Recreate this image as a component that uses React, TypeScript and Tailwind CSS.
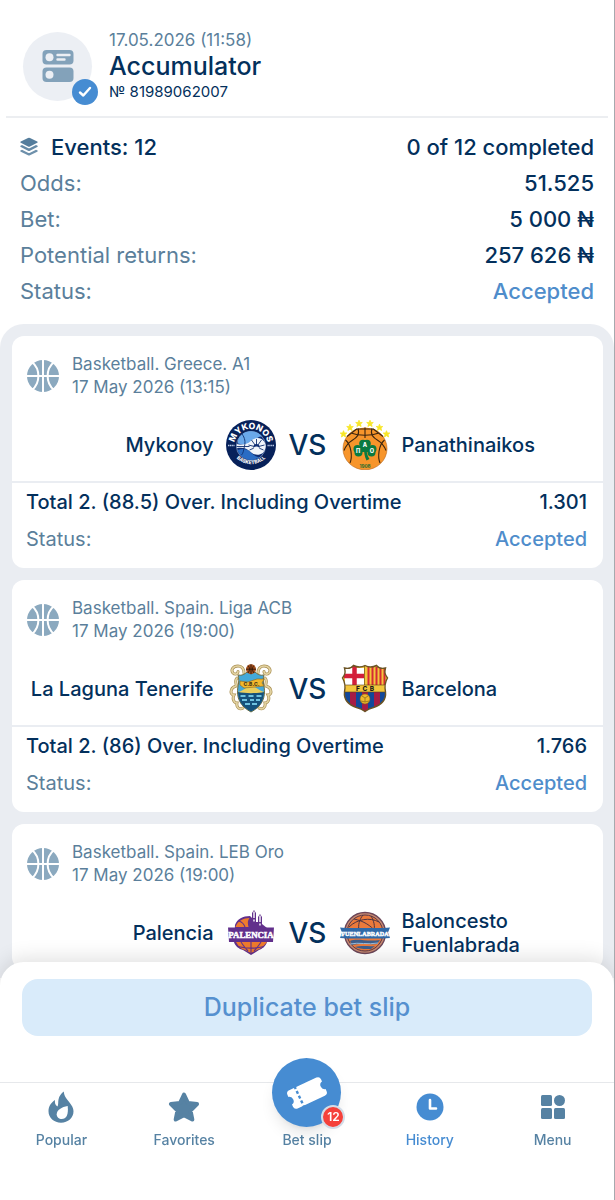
import type { ReactNode } from "react";

type Team = { name: string; logo: ReactNode };

type BetEvent = {
  id: number;
  league: string;
  date: string;
  home: Team;
  away: Team;
  market: string;
  odds: string;
};

function MykonosLogo() {
  return (
    <svg viewBox="0 0 50 50" className="size-12.5 shrink-0" role="img" aria-label="Mykonos Basketball">
      <defs>
        <path id="mykonos-top" d="M8.5 29a16.8 16.8 0 1 1 33 0" />
        <path id="mykonos-bottom" d="M5 29a20.8 20.8 0 0 0 40 0" />
      </defs>
      <circle cx="25" cy="25" r="25" fill="#07215a" />
      <circle cx="25" cy="26" r="14.6" fill="#0e2d73" stroke="#cfe0f4" strokeWidth="0.5" />
      <path d="M12 20a14 14 0 0 1 24-3.500c-4 0-6 2-8 5-3 4-9 4-16 2z" fill="#6aa9ea" />
      <path d="M11.500 30c6-2 10-1 13 2s5 5 9 5A14 14 0 0 1 11.500 30z" fill="#2a6cc4" />
      <path d="M10.800 24c7 1.500 11 0 14-3 4-4 10-4 13 0 3 4 2 9-1 12-4 3-9 2-12-1-4-4-8-5-14-4z" fill="#f1f5fb" />
      <g stroke="#10306f" strokeWidth="0.9" fill="none">
        <path d="M10.500 26.500h13M16 14c3 4 3.500 8 2.500 12s-1 7-3 9" />
        <path d="M30.500 27v-8M30.500 27l-5-7M30.500 27l5-7M30.500 27l-8-2M30.500 27l8-2M30.500 27l-7 3M30.500 27l7 3" />
      </g>
      <circle cx="30.500" cy="27" r="3" fill="#0e2d73" />
      <path d="M27.500 34v-4.500a3 3 0 0 1 6 0V34z" fill="#f1f5fb" />
      <text className="font-[Inter]" fontSize="8.6" fontWeight="800" fill="#fff" textAnchor="middle">
        <textPath href="#mykonos-top" startOffset="50%">MYKONOS</textPath>
      </text>
      <text className="font-[Inter]" fontSize="4.8" fontWeight="800" fill="#fff" textAnchor="middle">
        <textPath href="#mykonos-bottom" startOffset="50%">BASKETBALL</textPath>
      </text>
      <path d="M2 25.500h6.500M41.500 25.500H48" stroke="#b9c9e6" strokeWidth="1.400" strokeDasharray="1.300 .5" />
    </svg>
  );
}

const starSpots = [
  [3.5, 14],
  [10, 7.5],
  [19, 3.5],
  [30, 3.5],
  [39.500, 7.500],
  [46.500, 14],
];

function PanathinaikosLogo() {
  return (
    <svg viewBox="0 0 50 50" className="size-12.5 shrink-0" role="img" aria-label="Panathinaikos">
      <ellipse cx="25" cy="28.600" rx="22" ry="21.200" fill="#f7952b" stroke="#b9651a" strokeWidth="0.6" />
      <path d="M0 0h50v12L38 9H12L0 12z" fill="#fff" />
      <path d="M9 14Q17 7.500 25 7.500T41 14z" fill="#f7952b" />
      <g stroke="#3b2510" strokeWidth="1.100" fill="none">
        <path d="M25 7.500V18M18 8.500c2 6-1 9-6 12-4 2.500-6.500 6-8 10M32 8.500c-2 6 1 9 6 12 4 2.500 6.500 6 8 10" />
        <path d="M11 13c8 3 20 3 28 0M5.500 20c6 5 7 17 4.500 23M44.500 20c-6 5-7 17-4.500 23M16.500 9h17M7 16.500 17 8.800M43 16.500 33 8.800" />
      </g>
      {starSpots.map(([x, y]) => (
        <path
          key={x}
          transform={`translate(${x} ${y})`}
          d="M0-3.300.9-1.100 3.300-1 1.500.600 2.100 3 0 1.700-2.100 3-1.500.600-3.300-1-.9-1.100z"
          fill="#f8e628"
          stroke="#f8e628"
          strokeWidth="0.8"
        />
      ))}
      <g fill="#0a7a40">
        <circle cx="23" cy="23.500" r="3.800" />
        <circle cx="27" cy="23.500" r="3.800" />
        <circle cx="17.500" cy="29" r="4" />
        <circle cx="18.500" cy="32.500" r="4" />
        <circle cx="32.500" cy="29" r="4" />
        <circle cx="31.500" cy="32.500" r="4" />
        <path d="M20 24h10v8H20z" />
        <path d="M24 28h2.500c0 5 1 8 3 11l-3 1.500c-2-4-2.500-8-2.500-12.500z" />
      </g>
      <g className="font-[Inter]" fontSize="5.6" fontWeight="800" fill="#fff" textAnchor="middle">
        <text x="25" y="26.500">A</text>
        <text x="18" y="33">Π</text>
        <text x="32" y="33">O</text>
      </g>
      <text x="25" y="48" className="font-[Inter]" fontSize="4.6" fontWeight="700" fill="#186b32" textAnchor="middle">
        1908
      </text>
    </svg>
  );
}

function TenerifeLogo() {
  return (
    <svg viewBox="0 0 50 50" className="size-12.5 shrink-0" role="img" aria-label="La Laguna Tenerife">
      <g fill="none" strokeLinecap="round">
        <g stroke="#a98f52" strokeWidth="3">
          <path d="M18 9c0-4-2-7-6-7C7 2 4.500 6 7 9c2 2 5 1 5-1.500M32 9c0-4 2-7 6-7 5 0 7.500 4 5 7-2 2-5 1-5-1.500" />
          <path d="M11 14c-3 3 0 6-1 8-3 1-5 3-5 6 0 2 2 3 3 3-2 4 0 8 3 8-1 5 3 7 6 5M39 14c3 3 0 6 1 8 3 1 5 3 5 6 0 2-2 3-3 3 2 4 0 8-3 8 1 5-3 7-6 5" />
        </g>
        <g stroke="#e3d3a2" strokeWidth="1.700">
          <path d="M18 9c0-4-2-7-6-7C7 2 4.500 6 7 9c2 2 5 1 5-1.500M32 9c0-4 2-7 6-7 5 0 7.500 4 5 7-2 2-5 1-5-1.500" />
          <path d="M11 14c-3 3 0 6-1 8-3 1-5 3-5 6 0 2 2 3 3 3-2 4 0 8 3 8-1 5 3 7 6 5M39 14c3 3 0 6 1 8 3 1 5 3 5 6 0 2-2 3-3 3 2 4 0 8-3 8 1 5-3 7-6 5" />
        </g>
      </g>
      <path d="M12 11c4 1 7-1 9-3h8c2 2 5 4 9 3-1 3-1 7 0 11 2 12-2 20-13 26C14 42 10 34 12 22c1-4 1-8 0-11z" fill="#45a9d8" stroke="#6d6a3d" strokeWidth="1" />
      <path d="M12 28h26c-.500 9-4 15-13 19.500C16 43 12.500 37 12 28z" fill="#15527c" />
      <path d="M12 28c5-1 9-6 13-6s8 5 13 6c-7 1.500-19 1.500-26 0z" fill="#e9cf5e" />
      <path d="M14 17l8 1 9-3 7 0-2 4 2 3-9 1-11 1-4-3z" fill="#f3b92d" stroke="#8a611b" strokeWidth="0.6" />
      <text x="25.500" y="22" className="font-[Inter]" fontSize="5" fontWeight="800" fill="#493516" textAnchor="middle">
        C.B.C.
      </text>
      <path d="M14.500 32h5m3 0h5m3 0h5M16 36h5m3 0h4m2 0h4M19 40h5m2 0h5" stroke="#6fc3e0" strokeWidth="1.800" />
      <circle cx="25" cy="5.200" r="5" fill="#a8501c" />
      <path d="M20 5.200h10M25 .200v10M22 1.500c2 2 2 5 0 7.500M28 1.500c-2 2-2 5 0 7.500" stroke="#2e170b" strokeWidth="0.9" fill="none" />
    </svg>
  );
}

function BarcelonaLogo() {
  return (
    <svg viewBox="0 0 50 50" className="size-12.5 shrink-0" role="img" aria-label="Barcelona">
      <defs>
        <clipPath id="barca-shield">
          <path d="M4.500 4c4 1 7 0 9-2.500 4 2 8 2 11.500 0 3.500 2 7.500 2 11.500 0 2 2.500 5 3.500 9 2.500-1 4-1 6 2 10-3 5-3 9-2 14 1 9-5 13-12 15.500-4 1-6 2-8.500 4-2.500-2-4.500-3-8.500-4C9.500 41 3.500 37 4.500 28c1-5 1-9-2-14 3-4 3-6 2-10z" />
        </clipPath>
      </defs>
      <g clipPath="url(#barca-shield)">
        <path fill="#f3c63c" d="M0 0h50v50H0z" />
        <path fill="#fff" d="M5 4h19v17H5z" />
        <path d="M14.500 2v19M4 12h20" stroke="#d31f3a" strokeWidth="4.500" />
        <path d="M28.500 3v18M32.500 3v18M36.500 3v18M40.500 3v18M44.500 3v18" stroke="#d42b34" strokeWidth="2" />
        <path fill="#12489a" d="M4 28h42v20H4z" />
        <path d="M13 28v20M25 28v20M37 28v20" stroke="#a61c45" strokeWidth="6" />
        <circle cx="25" cy="35" r="5" fill="#efb92b" stroke="#83671c" strokeWidth="0.6" />
        <path d="M22 32l3 2 3-2M25 34v4M21 37l4 1 4-1" stroke="#83671c" strokeWidth="0.7" fill="none" />
        <path d="M0 21h50M0 28h50M24.500 0v21" stroke="#5a4217" strokeWidth="0.6" />
      </g>
      <path
        d="M4.500 4c4 1 7 0 9-2.500 4 2 8 2 11.500 0 3.500 2 7.500 2 11.500 0 2 2.500 5 3.500 9 2.500-1 4-1 6 2 10-3 5-3 9-2 14 1 9-5 13-12 15.500-4 1-6 2-8.500 4-2.500-2-4.500-3-8.500-4C9.500 41 3.500 37 4.500 28c1-5 1-9-2-14 3-4 3-6 2-10z"
        fill="none"
        stroke="#6b5425"
        strokeWidth="1.400"
      />
      <g className="font-[Inter]" fontSize="6.500" fontWeight="800" fill="#221d16" textAnchor="middle">
        <text x="18" y="27">F</text>
        <text x="25" y="27">C</text>
        <text x="32" y="27">B</text>
      </g>
    </svg>
  );
}

function PalenciaLogo() {
  return (
    <svg viewBox="0 0 50 50" className="size-12.5 shrink-0" role="img" aria-label="Palencia">
      <path d="M9 17c2-6 8-9 15-9l2 2V5l2-3 2 3v9h2V9l2-3 2 3v7l5 4v14c-1 4-5 7-8 8l-8 5-8-5c-4-1-8-4-9-8z" fill="#62308c" />
      <path d="M9.500 19c2-6 8-9 14-9-2 3-2 5-1 9zM10 34h31c-3 4-7 7-10 8l-6 3-6-3c-4-1-7-4-9-8z" fill="#ee7b2c" />
      <path d="M13 13c3 1 5 3 6 6M15 34c2 3 3 5 7 9M25 34v11M35 34c-2 3-3 5-7 9M12 38.500c8 2 18 2 26 0" stroke="#62308c" strokeWidth="1.100" fill="none" />
      <path d="M28 3.500V10M34 7.500V14M28 11.500v2M34 15.500v2" stroke="#fff" strokeWidth="1.400" />
      <path d="M2 19.500h46l-1 14.500H3z" fill="#62308c" />
      <text x="25" y="30" className="font-['Liberation_Serif']" fontSize="8.800" fontWeight="700" fill="#fff" stroke="#fff" strokeWidth="0.500" textAnchor="middle">
        PALENCIA
      </text>
    </svg>
  );
}

function FuenlabradaLogo() {
  return (
    <svg viewBox="0 0 50 50" className="size-12.5 shrink-0" role="img" aria-label="Baloncesto Fuenlabrada">
      <circle cx="25" cy="25" r="20.500" fill="#c98a70" stroke="#6b4658" strokeWidth="1.400" />
      <circle cx="25" cy="25" r="18" fill="#ea7a3c" stroke="#57384a" strokeWidth="1" />
      <path d="M9 19C17 11 30 9 39 14M14 11c10 2 17 7 21 12M23 7c-4 5-5 10-4 16M31 8c3 5 4 10 3 15" stroke="#4d3442" strokeWidth="1" fill="none" />
      <path d="M10 33c8-3 16 1 30-1l-3 4c-8 1-15-1-25 1zM15 39c8-2 14 0 20-1l-4 3c-5 0-10 0-13-1z" fill="#3f5f8c" />
      <path d="M10 36c9-2 18 1 28-1" stroke="#9dbcd8" strokeWidth="1" fill="none" />
      <path d="M0 19.500l6 .500h38l6-.500-2 5 2 5.500-8 .500H8L0 30l2-5.500z" fill="#2f69a8" />
      <text x="25" y="27.500" className="font-['Liberation_Serif']" fontSize="6.200" fontWeight="700" fill="#fff" stroke="#fff" strokeWidth="0.400" textAnchor="middle">
        FUENLABRADA
      </text>
    </svg>
  );
}

const events: BetEvent[] = [
  {
    id: 1,
    league: "Basketball. Greece. A1",
    date: "17 May 2026 (13:15)",
    home: { name: "Mykonoy", logo: <MykonosLogo /> },
    away: { name: "Panathinaikos", logo: <PanathinaikosLogo /> },
    market: "Total 2. (88.5) Over. Including Overtime",
    odds: "1.301",
  },
  {
    id: 2,
    league: "Basketball. Spain. Liga ACB",
    date: "17 May 2026 (19:00)",
    home: { name: "La Laguna Tenerife", logo: <TenerifeLogo /> },
    away: { name: "Barcelona", logo: <BarcelonaLogo /> },
    market: "Total 2. (86) Over. Including Overtime",
    odds: "1.766",
  },
  {
    id: 3,
    league: "Basketball. Spain. LEB Oro",
    date: "17 May 2026 (19:00)",
    home: { name: "Palencia", logo: <PalenciaLogo /> },
    away: { name: "Baloncesto Fuenlabrada", logo: <FuenlabradaLogo /> },
    market: "",
    odds: "",
  },
];

const summary = [
  { label: "Odds:", value: "51.525" },
  { label: "Bet:", value: "5 000 ₦" },
  { label: "Potential returns:", value: "257 626 ₦" },
];

function BasketballIcon() {
  return (
    <svg viewBox="0 0 32 32" className="size-8 shrink-0" aria-hidden="true">
      <circle cx="16" cy="16" r="16" fill="#8ba9bf" />
      <path d="M16 0v32M0 16h32M5 2c8.500 7 8.500 21 0 28M27 2c-8.500 7-8.500 21 0 28" stroke="#fff" strokeWidth="2" fill="none" />
    </svg>
  );
}

function AccumulatorIcon() {
  return (
    <svg viewBox="0 0 32 32" className="size-8" aria-hidden="true">
      <rect y="0" x="0.500" width="31" height="14.500" rx="4" fill="#83a2ba" />
      <rect y="17.500" x="0.500" width="31" height="14.500" rx="4" fill="#83a2ba" />
      <circle cx="7.500" cy="7.300" r="4" fill="#eceff4" />
      <circle cx="7.500" cy="24.700" r="4" fill="#eceff4" />
      <path d="M15.500 5h12M15.500 9.500h7" stroke="#eceff4" strokeWidth="2.400" strokeLinecap="round" />
    </svg>
  );
}

function LayersIcon() {
  return (
    <svg viewBox="0 0 18 19" className="h-5 w-4.5" fill="#557d9c" aria-hidden="true">
      <path d="M8 .400q1-.500 2 0l7.200 3.600q1 .600 0 1.300L10 8.900q-1 .500-2 0L.800 5.300q-1-.700 0-1.300z" />
      <path d="M.500 8.300 2 7.600l6 3q1 .500 2 0l6-3 1.500.700q.800.700-.300 1.300L10 13.200q-1 .500-2 0L.800 9.600q-1.100-.600-.300-1.300z" opacity=".9" />
      <path d="M.500 12.900 2 12.200l6 3q1 .500 2 0l6-3 1.500.700q.800.700-.300 1.300L10 17.800q-1 .500-2 0l-7.200-3.600q-1.100-.600-.300-1.300z" opacity=".85" />
    </svg>
  );
}

function FlameIcon() {
  return (
    <svg viewBox="0 0 26 32" className="h-8 w-6.5" aria-hidden="true">
      <path d="M15.800.500c.200 4.500 2.700 7 5.700 11 2.300 3 4 5.500 4 8.800C25.500 27 20 31.700 13 31.700S.500 27 .500 20.300C.500 15.500 3 11.500 7 9c-.300 3 0 5 2.500 6.500C10.500 13.500 10 11 10.500 8.500c.600-3.500 2.800-6 5.300-8z" fill="#5682a3" />
      <path d="M19.700 15c-6 1-11 4-11 8.200 0 3 2.200 4.800 5 4.800 4.500 0 7-4 6-13z" fill="#fff" />
    </svg>
  );
}

function StarIcon() {
  return (
    <svg viewBox="0 0 32 30" className="h-7.5 w-8" aria-hidden="true">
      <path d="M16 2.500 20 11 29 12 22.500 18.500 24.300 27.500 16 23.200 7.700 27.500 9.500 18.500 3 12l9-1z" fill="#5682a3" stroke="#5682a3" strokeWidth="4" strokeLinejoin="round" />
    </svg>
  );
}

function ClockIcon() {
  return (
    <svg viewBox="0 0 28 28" className="size-7" aria-hidden="true">
      <circle cx="14" cy="14" r="13.500" fill="#468cd2" />
      <path d="M14 7v8.500h6" stroke="#fff" strokeWidth="2.600" strokeLinecap="round" strokeLinejoin="round" fill="none" />
    </svg>
  );
}

function MenuIcon() {
  return (
    <svg viewBox="0 0 26 26" className="size-6.5" fill="#5682a3" aria-hidden="true">
      <rect x="1" y="1" width="11" height="11" rx="1.500" />
      <circle cx="19.500" cy="6.500" r="5.500" />
      <rect x="1" y="14" width="11" height="11" rx="1.500" />
      <rect x="14" y="14" width="11" height="11" rx="1.500" />
    </svg>
  );
}

function TicketIcon() {
  return (
    <svg viewBox="0 0 42 36" className="h-9 w-10.5" aria-hidden="true">
      <g transform="rotate(-25 21 18)">
        <path d="M6 8h30a3.500 3.500 0 0 1 3.500 3.500v2.300a4.300 4.300 0 0 0 0 8.400v2.300A3.500 3.500 0 0 1 36 28H6a3.500 3.500 0 0 1-3.500-3.500v-2.300a4.300 4.300 0 0 0 0-8.400v-2.300A3.500 3.500 0 0 1 6 8z" fill="#fff" />
        <path d="M12.500 6.500v24" stroke="#468cd2" strokeWidth="2.400" strokeDasharray="3 2.300" />
      </g>
    </svg>
  );
}

function EventCard({ event }: { event: BetEvent }) {
  return (
    <article className="rounded-xl bg-white">
      <div className="flex items-center gap-[13px] px-[15px] pt-[17px]">
        <BasketballIcon />
        <div className="text-[17px] leading-[23px] text-[#5b7f9b]">
          <p>{event.league}</p>
          <p>{event.date}</p>
        </div>
      </div>
      <div className="mt-[21px] mb-[11px] flex items-center text-xl font-medium text-[#03305c]">
        <div className="flex flex-1 items-center justify-end gap-3 text-right">
          <h2>{event.home.name}</h2>
          {event.home.logo}
        </div>
        <span className="w-16 text-center text-[28px] leading-8">VS</span>
        <div className="flex flex-1 items-center gap-3 leading-6">
          {event.away.logo}
          <h2 className="max-w-36">{event.away.name}</h2>
        </div>
      </div>
      {event.market && (
        <div className="border-t-2 border-[#eaedf2] px-3.5 pt-[3px] pb-[13px] text-xl leading-8">
          <div className="flex justify-between font-medium text-[#03305c]">
            <p>{event.market}</p>
            <p className="pr-0.5">{event.odds}</p>
          </div>
          <div className="mt-[5px] flex justify-between">
            <p className="text-[#5b7f9b]">Status:</p>
            <p className="pr-0.5 font-medium text-[#4f8dcb]">Accepted</p>
          </div>
        </div>
      )}
    </article>
  );
}

function NavItem({ label, icon, active }: { label: string; icon: ReactNode; active?: boolean }) {
  return (
    <a
      href={`#${label.toLowerCase()}`}
      aria-current={active ? "page" : undefined}
      className={`flex flex-1 flex-col items-center text-sm font-medium ${active ? "text-[#468cd2]" : "text-[#5682a3]"}`}
    >
      <span className="flex h-[47px] items-center">{icon}</span>
      <span>{label}</span>
    </a>
  );
}

export default function App() {
  return (
    <div className="flex h-screen flex-col overflow-hidden border-r border-[#a6a9ae] bg-white font-[Inter,sans-serif]">
      <header className="mx-1.5 flex items-center gap-[17px] border-b-2 border-[#eceef1] px-[17px] pt-7 pb-3">
        <div className="relative flex size-[69px] items-center justify-center rounded-full bg-[#eceff4]">
          <AccumulatorIcon />
          <span className="absolute -right-1.5 -bottom-1 flex size-6.5 items-center justify-center rounded-full bg-[#468cd2]">
            <svg viewBox="0 0 14 12" className="h-3 w-3.5" aria-hidden="true">
              <path d="M2 6.500 5.300 9.500 12 2" stroke="#fff" strokeWidth="2.400" strokeLinecap="round" strokeLinejoin="round" fill="none" />
            </svg>
          </span>
        </div>
        <div>
          <p className="text-[17px] leading-6 text-[#5b7f9b]">17.05.2026 (11:58)</p>
          <h1 className="text-[25px] leading-7 font-medium text-[#03305c]">Accumulator</h1>
          <p className="text-[15px] leading-6 text-[#03305c]">№ 81989062007</p>
        </div>
      </header>

      <section className="px-5 pt-[11px] pb-[15px] text-[22px] leading-9">
        <div className="flex justify-between font-medium text-[#03305c]">
          <h2 className="flex items-center gap-[13px]">
            <LayersIcon />
            Events: 12
          </h2>
          <p>0 of 12 completed</p>
        </div>
        <dl>
          {summary.map((row) => (
            <div key={row.label} className="flex justify-between">
              <dt className="text-[#5b7f9b]">{row.label}</dt>
              <dd className="font-medium text-[#03305c]">{row.value}</dd>
            </div>
          ))}
          <div className="flex justify-between">
            <dt className="text-[#5b7f9b]">Status:</dt>
            <dd className="font-medium text-[#4f8dcb]">Accepted</dd>
          </div>
        </dl>
      </section>

      <main className="flex min-h-0 flex-1 flex-col gap-3 overflow-y-auto rounded-t-3xl bg-[#eaedf2] py-3 pr-[11px] pl-3 [scrollbar-width:none]">
        {events.map((event) => (
          <EventCard key={event.id} event={event} />
        ))}
      </main>

      <footer className="relative -mt-4 rounded-t-3xl bg-white pt-[17px] shadow-[0_-4px_20px_rgba(0,0,0,0.12)]">
        <div className="px-5.5">
          <button
            type="button"
            className="h-[57px] w-full rounded-2xl bg-[#d9ebfa] text-[25px] font-medium text-[#5590cf]"
          >
            Duplicate bet slip
          </button>
        </div>
        <nav className="mt-[46px] flex h-[118px] border-t border-[#e6e8eb]">
          <NavItem label="Popular" icon={<FlameIcon />} />
          <NavItem label="Favorites" icon={<StarIcon />} />
          <a href="#bet-slip" className="relative flex flex-1 flex-col items-center pt-[47px] text-sm font-medium text-[#5682a3]">
            <span className="absolute -top-[25px] flex size-[69px] items-center justify-center rounded-full bg-[#468cd2] shadow-lg">
              <TicketIcon />
              <span className="absolute -right-1 -bottom-0.5 flex size-6 items-center justify-center rounded-full border-2 border-[#d3dce8] bg-[#f5413b] text-xs font-semibold text-white">
                12
              </span>
            </span>
            <span>Bet slip</span>
          </a>
          <NavItem label="History" icon={<ClockIcon />} active />
          <NavItem label="Menu" icon={<MenuIcon />} />
        </nav>
      </footer>
    </div>
  );
}
